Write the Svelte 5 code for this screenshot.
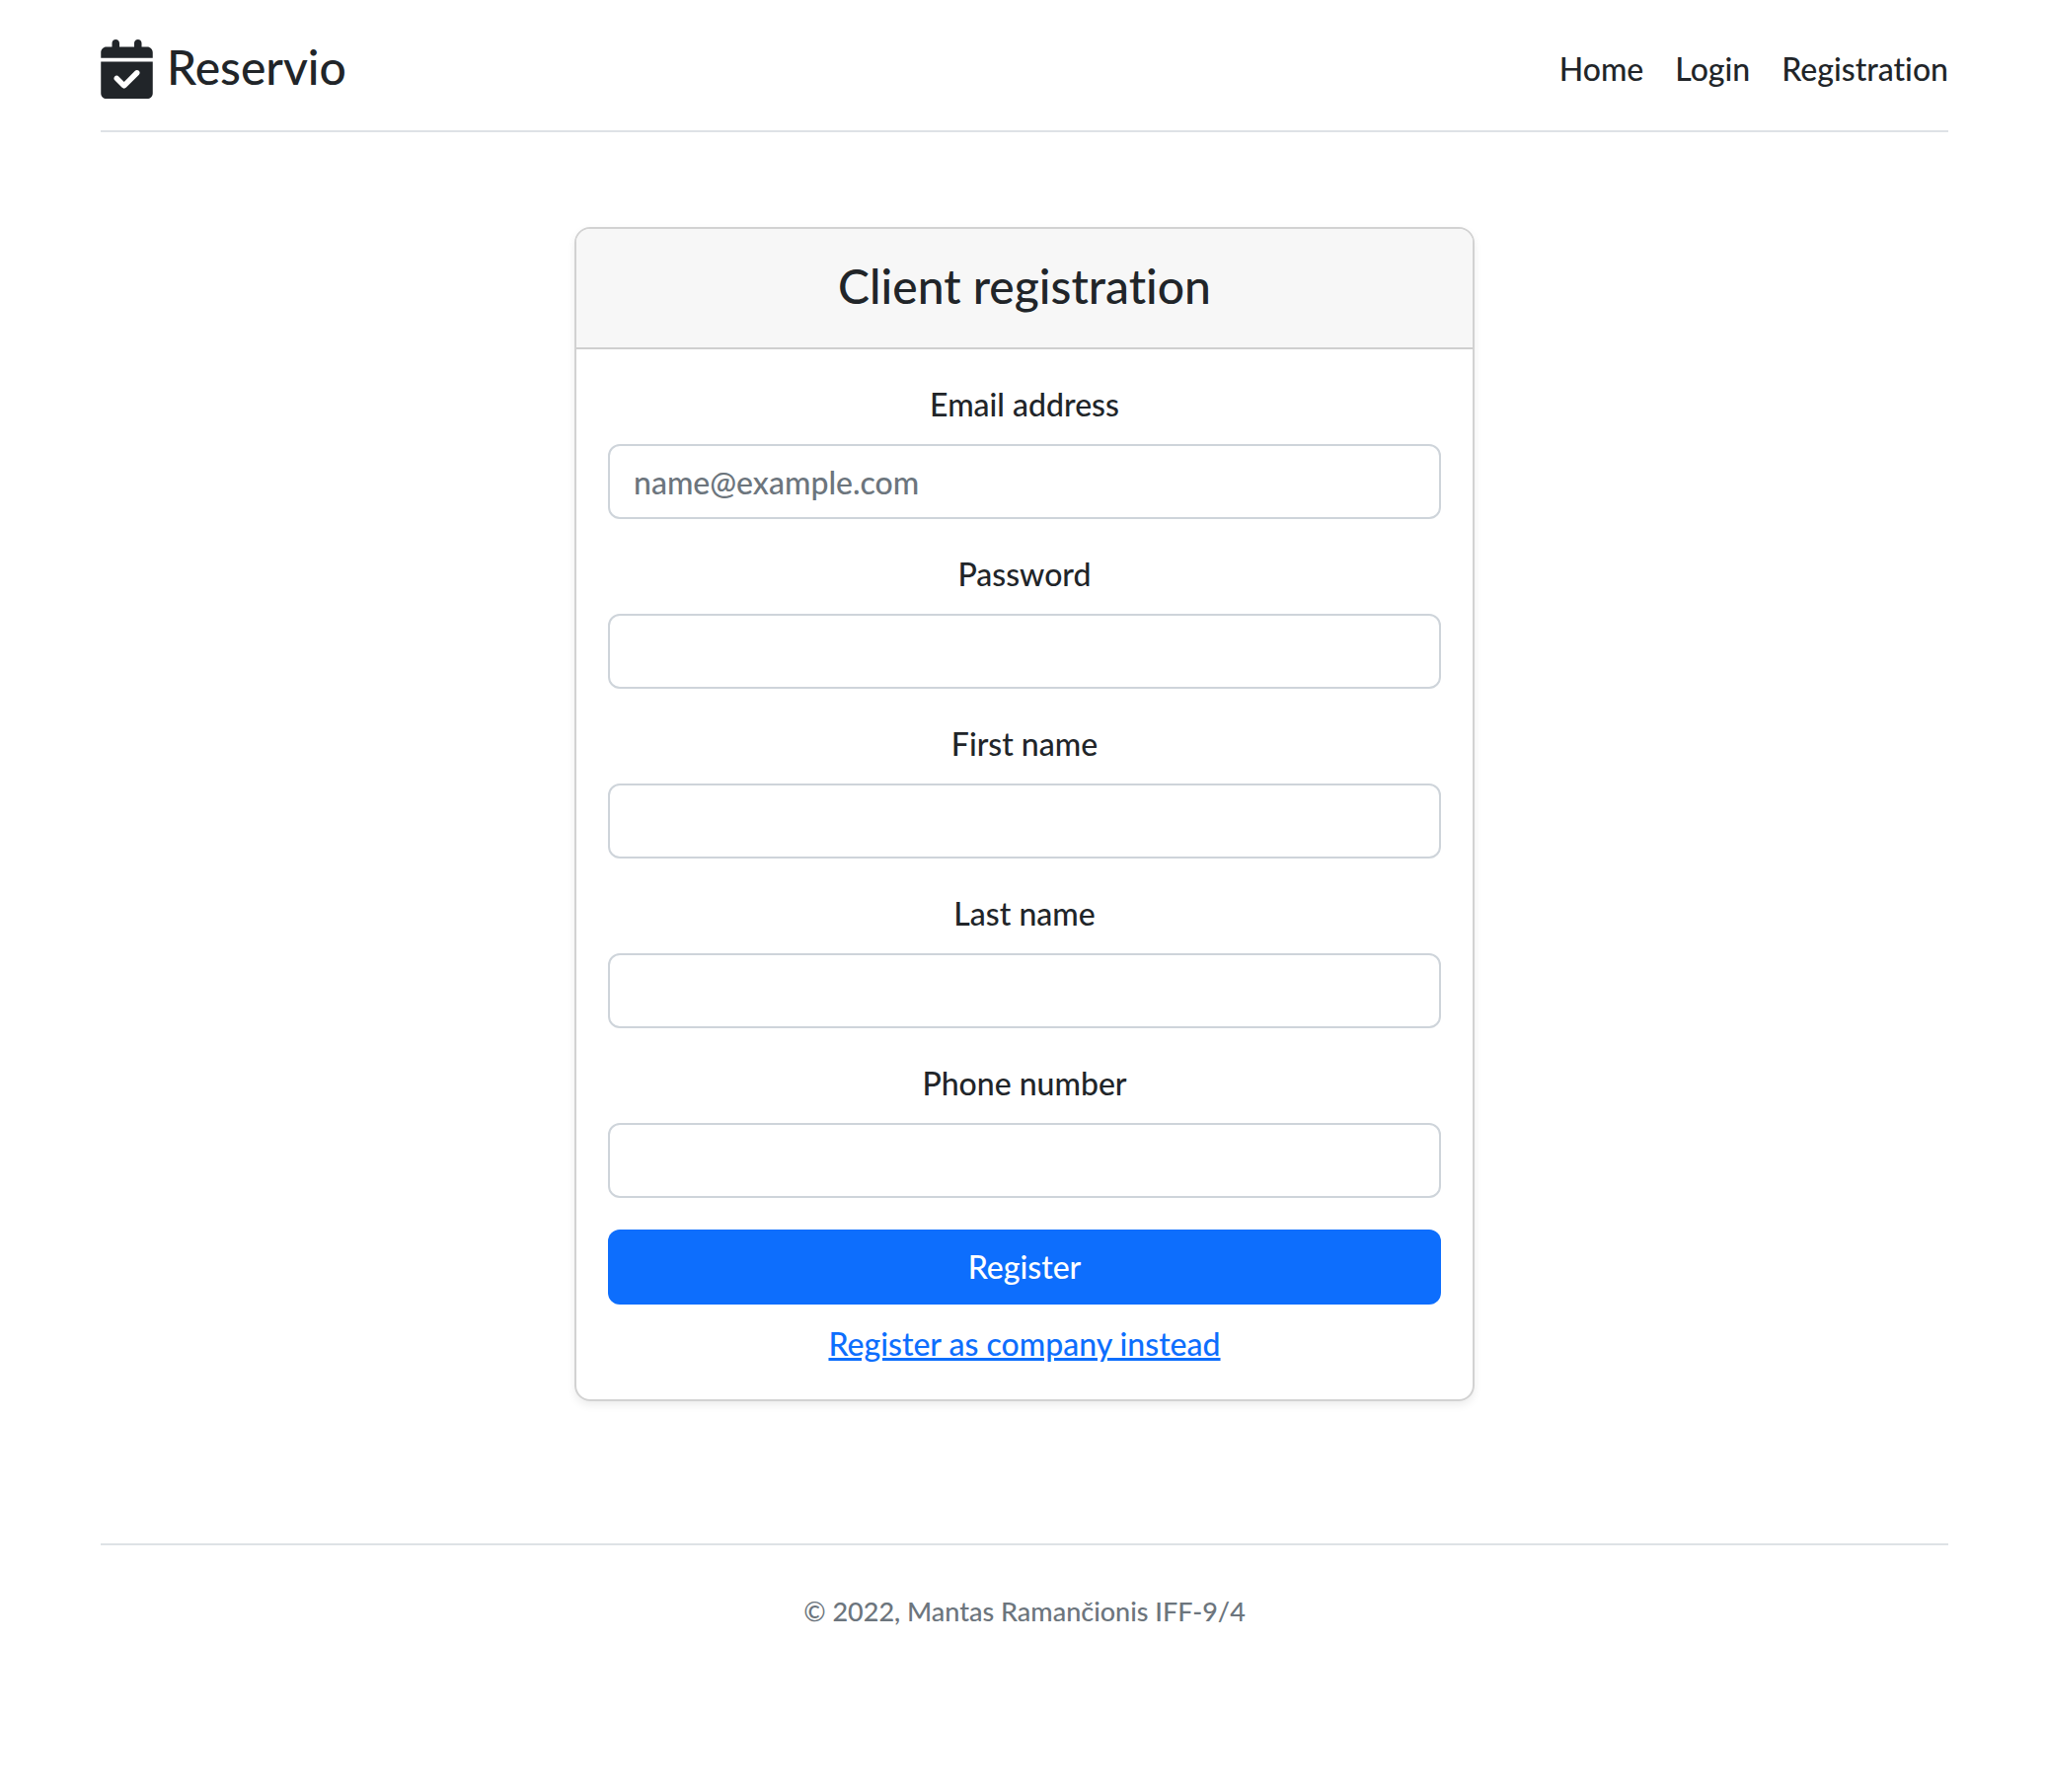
<script>
  const links = ['Home', 'Login', 'Registration'];
  const fields = [
    { id: 'email', label: 'Email address', type: 'email', placeholder: 'name@example.com' },
    { id: 'password', label: 'Password', type: 'password' },
    { id: 'first-name', label: 'First name', type: 'text' },
    { id: 'last-name', label: 'Last name', type: 'text' },
    { id: 'phone', label: 'Phone number', type: 'tel' }
  ];
</script>

<div class="page">
  <header>
    <a class="brand" href="/">
      <svg viewBox="0 0 448 512" aria-hidden="true">
        <path
          fill="currentColor"
          fill-rule="evenodd"
          d="M128 0c17.7 0 32 14.3 32 32V64H288V32c0-17.7 14.3-32 32-32s32 14.3 32 32V64h48c26.5 0 48 21.5 48 48v48H0V112C0 85.5 21.5 64 48 64H96V32c0-17.7 14.3-32 32-32zM0 192H448V464c0 26.5-21.5 48-48 48H48c-26.5 0-48-21.5-48-48V192zM329 305c9.4-9.4 9.4-24.6 0-33.9s-24.6-9.4-33.9 0l-95 95-47-47c-9.4-9.4-24.6-9.4-33.9 0s-9.4 24.6 0 33.9l64 64c9.4 9.4 24.6 9.4 33.9 0L329 305z"
        />
      </svg>
      <span>Reservio</span>
    </a>
    <nav>
      {#each links as link}
        <a href="/{link.toLowerCase()}">{link}</a>
      {/each}
    </nav>
  </header>

  <main>
    <section class="card">
      <h1>Client registration</h1>
      <form onsubmit={(e) => e.preventDefault()}>
        {#each fields as f}
          <div class="field">
            <label for={f.id}>{f.label}</label>
            <input id={f.id} type={f.type} placeholder={f.placeholder} />
          </div>
        {/each}
        <button type="submit">Register</button>
        <a class="switch" href="/register-company">Register as company instead</a>
      </form>
    </section>
  </main>

  <footer>© 2022, Mantas Ramančionis IFF-9/4</footer>
</div>

<style>
  :global(body) {
    background: #fff;
  }
  .page {
    box-sizing: border-box;
    padding: 0 100px 0 102px;
    font-family: Lato, 'Noto Sans', sans-serif;
    font-size: 32px;
    font-weight: 500;
    font-variant-ligatures: none;
    line-height: 48px;
    color: #212529;
  }
  header {
    display: flex;
    justify-content: space-between;
    align-items: center;
    padding: 32px 0;
    border-bottom: 2px solid #dee2e6;
  }
  header a {
    color: inherit;
    text-decoration: none;
  }
  .brand {
    display: flex;
    align-items: center;
    gap: 14px;
    height: 68px;
    padding-top: 4px;
    box-sizing: border-box;
    font-size: 48px;
  }
  .brand svg {
    align-self: flex-end;
    width: 53px;
    height: 60px;
  }
  nav {
    display: flex;
    gap: 32px;
    padding-top: 8px;
  }
  main {
    padding: 96px 0 144px;
  }
  .card {
    box-sizing: border-box;
    max-width: 912px;
    margin: 0 auto;
    border: 2px solid #d2d2d2;
    border-radius: 16px;
    box-shadow: 0 4px 8px rgba(0, 0, 0, 0.075);
    text-align: center;
  }
  h1 {
    margin: 0;
    padding: 30px 32px 34px;
    border-bottom: 2px solid #cfcfcf;
    border-radius: 14px 14px 0 0;
    background: #f7f7f7;
    font-size: 48px;
    font-weight: 500;
    line-height: 56px;
  }
  form {
    display: flex;
    flex-direction: column;
    padding: 32px;
  }
  .field {
    display: flex;
    flex-direction: column;
    gap: 16px;
    margin-bottom: 32px;
  }
  input {
    box-sizing: border-box;
    width: 100%;
    height: 76px;
    padding: 12px 24px;
    border: 2px solid #ced4da;
    border-radius: 12px;
    background: #fff;
    color: inherit;
    font: inherit;
  }
  input::placeholder {
    color: #6c757d;
    opacity: 1;
  }
  button {
    height: 76px;
    margin-bottom: 16px;
    border: 0;
    border-radius: 12px;
    background: #0d6efd;
    color: #fff;
    font: inherit;
  }
  .switch {
    align-self: center;
    color: #0d6efd;
    text-decoration: underline;
  }
  footer {
    padding: 46px 0 48px;
    border-top: 2px solid #dee2e6;
    color: #6c757d;
    font-size: 27px;
    line-height: 42px;
    text-align: center;
  }
</style>
